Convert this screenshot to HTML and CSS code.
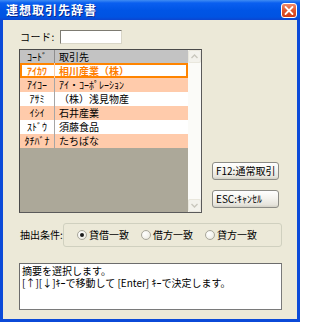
FILE: index.html
```html
<!DOCTYPE html>
<html lang="ja">
<head>
<meta charset="utf-8">
<title>連想取引先辞書</title>
<link rel="stylesheet" href="styles.css">
</head>
<body>
<div class="window">
  <div class="titlebar">
    <span class="title">連想取引先辞書</span>
    <span class="close">
      <svg width="16" height="15" viewBox="0 0 16 15"><path d="M4.5 4 L11.5 11 M11.5 4 L4.5 11" stroke="#fff" stroke-width="1.8" stroke-linecap="round"/></svg>
    </span>
  </div>
  <div class="client">
    <div class="code-row">
      <span class="label">コード:</span>
      <span class="input"></span>
    </div>
    <div class="main">
      <div class="grid">
        <div class="grid-body">
          <div class="row head"><span class="c1">ｺｰﾄﾞ</span><span class="c2">取引先</span></div>
          <div class="row sel"><span class="c1">ｱｲｶﾜ</span><span class="c2">相川産業（株）</span></div>
          <div class="row alt"><span class="c1">ｱｲｺｰ</span><span class="c2">ｱｲ・ｺｰﾎﾟﾚｰｼｮﾝ</span></div>
          <div class="row"><span class="c1">ｱｻﾐ</span><span class="c2">（株）浅見物産</span></div>
          <div class="row alt"><span class="c1">ｲｼｲ</span><span class="c2">石井産業</span></div>
          <div class="row"><span class="c1">ｽﾄﾞｳ</span><span class="c2">須藤食品</span></div>
          <div class="row alt"><span class="c1">ﾀﾁﾊﾞﾅ</span><span class="c2">たちばな</span></div>
          <div class="empty"></div>
        </div>
        <div class="scroll">
          <span class="sbtn"><svg width="11" height="11" viewBox="0 0 11 11"><path d="M2.5 7 L5.5 4 L8.5 7" fill="none" stroke="#c9c7bd" stroke-width="1.4"/></svg></span>
          <span class="track"></span>
          <span class="sbtn"><svg width="11" height="11" viewBox="0 0 11 11"><path d="M2.5 4 L5.5 7 L8.5 4" fill="none" stroke="#c9c7bd" stroke-width="1.4"/></svg></span>
        </div>
      </div>
      <div class="side">
        <span class="btn">F12:通常取引</span>
        <span class="btn">ESC:ｷｬﾝｾﾙ</span>
      </div>
    </div>
    <div class="cond-row">
      <span class="label cond-label">抽出条件:</span>
      <div class="group">
        <span class="radio"><span class="dot on"></span><span>貸借一致</span></span>
        <span class="radio"><span class="dot"></span><span>借方一致</span></span>
        <span class="radio"><span class="dot"></span><span>貸方一致</span></span>
      </div>
    </div>
    <div class="msg">
      <div class="line">摘要を選択します。</div>
      <div class="line">[↑][↓]ｷｰで移動して [Enter] ｷｰで決定します。</div>
    </div>
  </div>
</div>
</body>
</html>
```
FILE: styles.css
```css
* { box-sizing: border-box; }
html, body { margin: 0; padding: 0; }
body {
  width: 300px;
  height: 322px;
  overflow: hidden;
  font-family: "Noto Sans CJK JP", "DejaVu Sans", sans-serif;
  font-size: 10px;
  line-height: 12px;
  color: #000;
}
.window {
  width: 300px;
  height: 322px;
  display: flex;
  flex-direction: column;
  background: #0b4ad8;
}
.titlebar {
  height: 20px;
  flex: none;
  display: flex;
  align-items: center;
  justify-content: space-between;
  padding: 0 3px 0 6px;
  background: linear-gradient(to bottom, #3f8cf3 0%, #0a5ff0 15%, #0055e6 50%, #0053e2 85%, #0b45d0 100%);
}
.title {
  color: #fff;
  font-weight: bold;
  font-size: 12px;
  line-height: 14px;
  letter-spacing: 1px;
  text-shadow: 1px 1px 0 #0a2a90;
}
.close {
  width: 16px;
  height: 15px;
  display: flex;
  border: 1px solid #fff;
  border-radius: 3px;
  background: linear-gradient(to bottom, #f08a6c 0%, #e0582f 50%, #cf3c16 100%);
  align-items: center;
  justify-content: center;
}
.close svg { display: block; margin: -1px; }
.client {
  flex: 1;
  margin: 0 3px 3px 3px;
  background: #ece9d8;
  padding-left: 16px;
  display: flex;
  flex-direction: column;
}
.code-row {
  margin-top: 10px;
  height: 14px;
  display: flex;
  align-items: center;
}
.label { width: 41px; flex: none; padding-left: 1px; white-space: nowrap; letter-spacing: 0.5px; }
.input {
  width: 62px;
  height: 14px;
  background: #fff;
  border-top: 1px solid #7d7b72;
  border-left: 1px solid #7d7b72;
  border-right: 1px solid #d9d6c8;
  border-bottom: 1px solid #d9d6c8;
}
.main {
  margin-top: 5px;
  display: flex;
}
.grid {
  width: 183px;
  height: 164px;
  display: flex;
  border-top: 1px solid #4a4a4a;
  border-left: 1px solid #4a4a4a;
  border-right: 1px solid #5a5a5a;
  border-bottom: 1px solid #5a5a5a;
}
.grid-body {
  flex: 1;
  display: flex;
  flex-direction: column;
}
.row {
  height: 14px;
  display: flex;
  align-items: center;
  background: #fff;
  white-space: nowrap;
}
.row.head { height: 13px; background: #c3c3c3; }
.row.alt { background: #ffcbab; }
.row.sel {
  height: 15px;
  background: #fff;
  box-shadow: inset 0 0 0 2px #ff8400;
  color: #ff7e00;
  font-weight: bold;
}
.c1 {
  width: 35px;
  height: 100%;
  flex: none;
  display: flex;
  align-items: center;
  justify-content: center;
  border-right: 1px solid #a6a6a6;
}
.row.head .c1 { border-right-color: #8e8e8e; }
.row.sel .c1 { border-right-color: #ffcfa6; }
.c2 { padding-left: 4px; }
.empty { flex: 1; background: #aca899; }
.scroll {
  width: 13px;
  flex: none;
  display: flex;
  flex-direction: column;
  background: #f6f5ef;
}
.sbtn {
  width: 13px;
  height: 13px;
  display: flex;
  align-items: center;
  justify-content: center;
  border: 1px solid #e9e7dd;
  border-radius: 2px;
  background: #f3f2ec;
}
.track { flex: 1; background: #fbfbf8; }
.side {
  margin-left: 10px;
  padding-top: 113px;
  display: flex;
  flex-direction: column;
  gap: 10px;
}
.btn {
  width: 67px;
  height: 18px;
  display: flex;
  align-items: center;
  padding-left: 3px;
  white-space: nowrap;
  border: 1px solid #8c8c86;
  border-radius: 3px;
  background: linear-gradient(to bottom, #ffffff 0%, #f4f3ee 45%, #e6e4dc 85%, #d3d1c6 100%);
}
.cond-row {
  margin-top: 10px;
  height: 24px;
  display: flex;
  align-items: center;
}
.cond-label { width: 44px; letter-spacing: 0; }
.group {
  width: 219px;
  flex: none;
  height: 24px;
  border: 1px solid #d0d0bf;
  border-radius: 3px;
  display: flex;
  align-items: center;
  padding-left: 13px;
  gap: 12px;
}
.radio {
  display: flex;
  align-items: center;
  gap: 2px;
  white-space: nowrap;
}
.dot {
  width: 10px;
  height: 10px;
  border-radius: 50%;
  border: 1px solid #a9a79c;
  background: radial-gradient(circle at 35% 35%, #fff 0%, #f2f1ea 60%, #dedcd2 100%);
  position: relative;
}
.dot.on::after {
  content: "";
  position: absolute;
  left: 2px;
  top: 2px;
  width: 4px;
  height: 4px;
  border-radius: 50%;
  background: #1a1a1a;
}
.msg {
  margin-top: 16px;
  width: 263px;
  height: 47px;
  background: #fff;
  border-top: 1px solid #6c6c6c;
  border-left: 1px solid #6c6c6c;
  border-right: 1px solid #7a7a7a;
  border-bottom: 1px solid #7a7a7a;
  padding: 1px 0 0 2px;
  white-space: nowrap;
}
.line { height: 12px; line-height: 12px; }
```
